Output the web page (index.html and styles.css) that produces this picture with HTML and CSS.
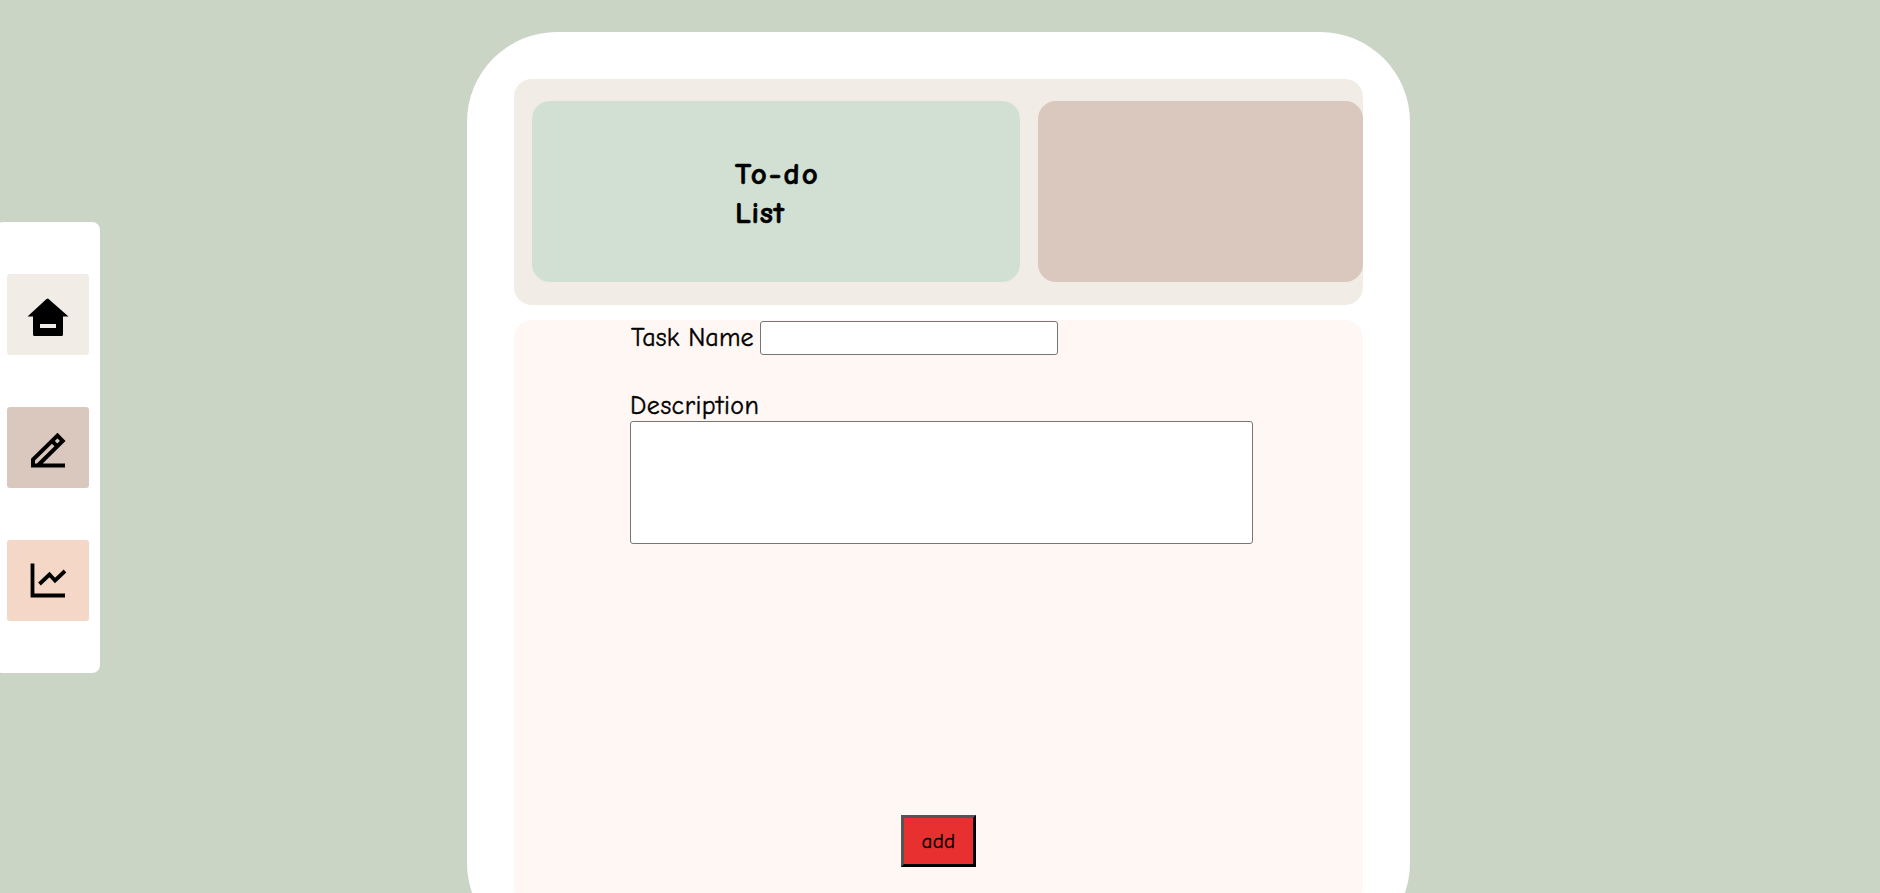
FILE: index.html
```html
<!DOCTYPE html>
<html lang="en">
<head>
<meta charset="utf-8">
<title>To-do List</title>
<link rel="stylesheet" href="styles.css">
</head>
<body>
<nav class="sidebar">
  <a class="nav-item home"><svg class="icon" viewBox="0 0 48 48"><path d="M24 7.500L44.500 25.500H39V43.500Q39 45 37.500 45H10.500Q9 45 9 43.500V25.500H3.500L22.500 8Q24 7 25.500 8ZM16 33V37H32V33Z" fill-rule="evenodd"/></svg></a>
  <a class="nav-item edit"><svg class="icon" viewBox="0 0 48 48"><path d="M41 41.500H9V35.500L33.500 11.500L38.700 16.900L13.800 41.500M28 17L33.300 22.300" fill="none" stroke="#000" stroke-width="4"/></svg></a>
  <a class="nav-item stats"><svg class="icon" viewBox="0 0 48 48"><path d="M8.500 6.500V38.500H41M15.500 27L25.500 17.500L31 23.500L41 14" fill="none" stroke="#000" stroke-width="3.800"/></svg></a>
</nav>
<main class="panel">
  <header class="banner">
    <div class="title-card"><h1 class="title"><span class="title-lead">To-do</span><br>List</h1></div>
    <div class="side-card"></div>
  </header>
  <form class="task-form">
    <div class="name-row">
      <label class="label name-label" for="name">Task Name</label>
      <input class="name-input" id="name" type="text">
    </div>
    <label class="label desc-label" for="desc">Description</label>
    <textarea class="desc-input" id="desc"></textarea>
    <button class="add" type="button">add</button>
  </form>
</main>
</body>
</html>
```
FILE: styles.css
```css
* { box-sizing: border-box; }
html { height: 893px; overflow: hidden; }
body {
  margin: 0;
  height: 893px;
  overflow: hidden;
  display: flex;
  align-items: flex-start;
  background: #cad5c5;
  color: #000;
  font-family: "Comic Sans MS", "Comic Neue", Lato, sans-serif;
}
.sidebar {
  flex: none;
  width: 105px;
  height: 451px;
  margin: 222px 0 0 -5px;
  padding: 52px 0 0 12px;
  display: flex;
  flex-direction: column;
  gap: 52px;
  background: #fff;
  border-radius: 8px;
}
.nav-item {
  display: flex;
  align-items: center;
  justify-content: center;
  width: 82px;
  height: 81px;
  border-radius: 3px;
}
.home { background: #f1ece6; }
.edit { background: #dac8be; }
.stats { background: #f4d7c6; }
.icon { width: 48px; height: 48px; }
.panel {
  flex: none;
  width: 943px;
  height: 921px;
  margin: 32px 0 0 367px;
  padding: 47px;
  display: flex;
  flex-direction: column;
  gap: 15px;
  background: #fff;
  border-radius: 90px;
}
.banner {
  flex: none;
  height: 226px;
  padding: 22px 0 23px 18px;
  display: flex;
  gap: 18px;
  background: #f1ece6;
  border-radius: 18px;
}
.title-card, .side-card { border-radius: 18px; }
.title-card {
  width: 488px;
  padding: 54px 0 0 203px;
  background: #d2e0d3;
}
.side-card { flex: 1; background: #dac8be; }
.title {
  margin: 0;
  font-size: 31px;
  line-height: 39px;
  font-weight: 700;
  letter-spacing: 0.7px;
  -webkit-text-stroke: 0.6px #000;
}
.title-lead { letter-spacing: 2px; }
.task-form {
  flex: 1;
  padding: 1px 0 0 116px;
  display: flex;
  flex-direction: column;
  align-items: flex-start;
  background: #fff7f4;
  border-radius: 18px;
}
.name-row { display: flex; height: 34px; }
.label {
  font-size: 26px;
  line-height: 34px;
  white-space: nowrap;
  -webkit-text-stroke: 0.4px #000;
}
.name-label { width: 130px; padding-left: 1px; letter-spacing: 0.1px; }
.desc-label { margin-top: 34px; letter-spacing: 0.5px; }
.name-input, .desc-input {
  flex: none;
  margin: 0;
  border: 1px solid #767676;
  border-radius: 3px;
  background: #fff;
  resize: none;
}
.name-input { width: 298px; height: 34px; }
.desc-input { width: 623px; height: 123px; margin-top: -2px; }
.add {
  width: 75px;
  height: 52px;
  margin: 271px 0 0 271px;
  padding: 0;
  border: 3px solid;
  border-color: #555 #000 #000 #555;
  background: #e93030;
  color: #000;
  font: 21px "Comic Sans MS", "Comic Neue", Lato, sans-serif;
  letter-spacing: 0.3px;
  -webkit-text-stroke: 0.3px #000;
}
```
